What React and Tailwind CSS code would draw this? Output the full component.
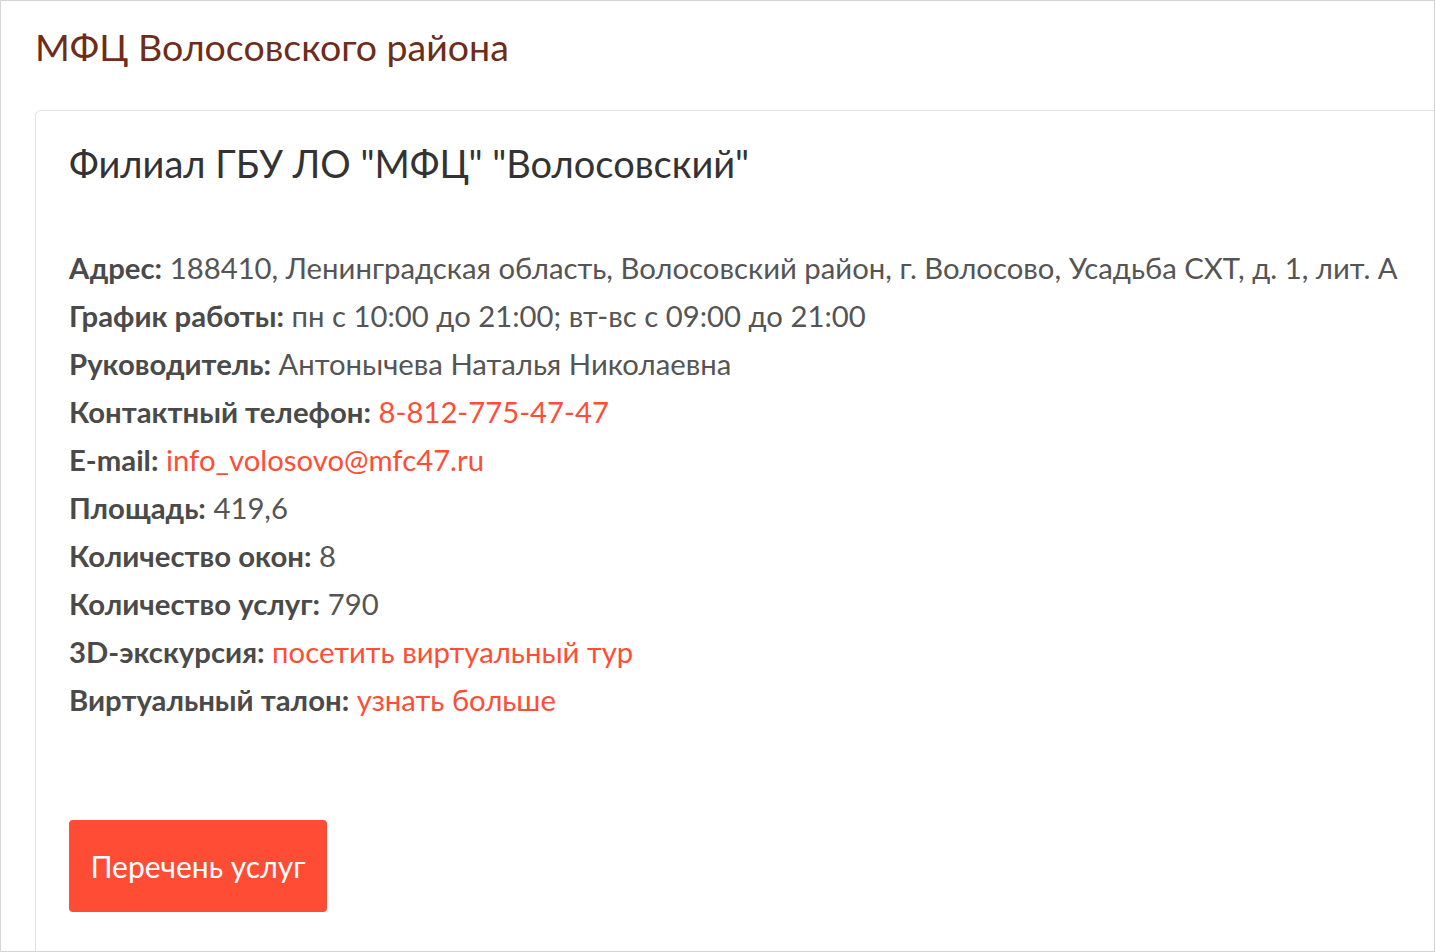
import React from 'react';

const rows = [
  { label: 'Адрес:', value: '188410, Ленинградская область, Волосовский район, г. Волосово, Усадьба СХТ, д. 1, лит. А' },
  { label: 'График работы:', value: 'пн с 10:00 до 21:00; вт-вс с 09:00 до 21:00' },
  { label: 'Руководитель:', value: 'Антонычева Наталья Николаевна' },
  { label: 'Контактный телефон:', value: '8-812-775-47-47', link: true },
  { label: 'E-mail:', value: 'info_volosovo@mfc47.ru', link: true },
  { label: 'Площадь:', value: '419,6' },
  { label: 'Количество окон:', value: '8' },
  { label: 'Количество услуг:', value: '790' },
  { label: '3D-экскурсия:', value: 'посетить виртуальный тур', link: true },
  { label: 'Виртуальный талон:', value: 'узнать больше', link: true },
];

export default function App() {
  return (
    <div className="h-[952px] w-[1435px] overflow-hidden border border-[#d4d4d4] bg-white font-['Lato',sans-serif]">
      <h1 className="pl-[34px] pt-[22px] text-[37.5px] leading-[48px] text-[#6e2d1a]">МФЦ Волосовского района</h1>

      <div className="ml-[34px] mt-[39px] h-[900px] rounded-tl-[6px] border-l border-t border-[#e3e3e3] pl-[33px] pt-[27px]">
        <h2 className="text-[38px] leading-[50px] text-[#333]">Филиал ГБУ ЛО "МФЦ" "Волосовский"</h2>

        <div className="mt-[56px] text-[29.3px] leading-[48px] text-[#555]">
          {rows.map((r) => (
            <div key={r.label} className="whitespace-nowrap">
              <b className="font-bold text-[#4a4a4a]">{r.label}</b>{' '}
              {r.link ? (
                <a href="#" className="text-[#ff4d36]">{r.value}</a>
              ) : (
                <span>{r.value}</span>
              )}
            </div>
          ))}
        </div>

        <button className="mt-[96px] h-[92px] w-[258px] rounded-[4px] bg-[#ff4c34] text-[30px] text-white">
          Перечень услуг
        </button>
      </div>
    </div>
  );
}
